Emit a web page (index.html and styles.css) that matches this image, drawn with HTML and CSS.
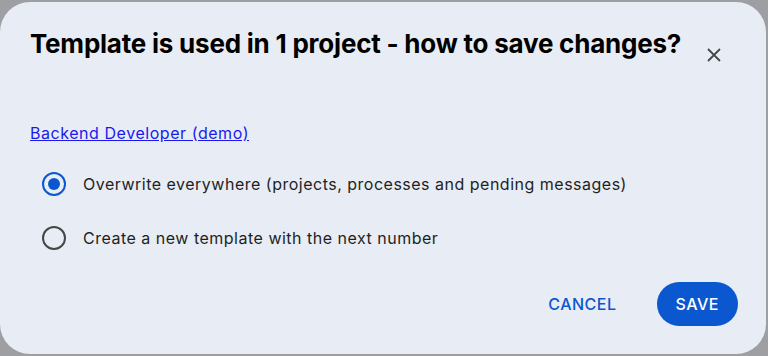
FILE: index.html
```html
<!DOCTYPE html>
<html lang="en">
<head>
    <meta charset="UTF-8">
    <meta name="viewport" content="width=device-width, initial-scale=1.0">
    <title>Save template</title>
    <link rel="stylesheet" href="styles.css">
</head>
<body>
    <div class="dialog">
        <div class="dialog-head">
            <h1>Template is used in 1 project - how to save changes?</h1>
            <button class="close-btn" aria-label="Close">
                <svg width="14" height="14" viewBox="0 0 14 14">
                    <path d="M1 1 L13 13 M13 1 L1 13" stroke="#444746" stroke-width="1.8" fill="none"/>
                </svg>
            </button>
        </div>

        <a class="project-link" href="#">Backend Developer (demo)</a>

        <div class="options">
            <label class="option">
                <input type="radio" name="mode" checked>
                <span class="radio"></span>
                Overwrite everywhere (projects, processes and pending messages)
            </label>
            <label class="option">
                <input type="radio" name="mode">
                <span class="radio"></span>
                Create a new template with the next number
            </label>
        </div>

        <div class="actions">
            <button class="cancel-btn">Cancel</button>
            <button class="save-btn">Save</button>
        </div>
    </div>
</body>
</html>
```

FILE: styles.css
```css
body {
    margin: 0;
    padding: 0;
    background: #9d9fa3;
    font-family: Inter, "Liberation Sans", sans-serif;
}
.dialog {
    box-sizing: border-box;
    width: 766px;
    height: 352px;
    margin: 2px 2px 0 0;
    background-color: #e8ecf4;
    border-radius: 30px;
    padding: 25px 28px 0 30px;
    display: flex;
    flex-direction: column;
}
.dialog-head {
    display: flex;
    align-items: flex-start;
    justify-content: space-between;
}
.dialog-head h1 {
    margin: 0;
    font-size: 26px;
    line-height: 34px;
    font-weight: 700;
    color: #000;
    letter-spacing: -0.22px;
}
.close-btn {
    background: none;
    border: none;
    padding: 0;
    margin: 21px 17px 0 0;
    width: 14px;
    height: 14px;
    cursor: pointer;
}
.close-btn svg {
    display: block;
}
.project-link {
    margin-top: 61px;
    align-self: flex-start;
    color: #1a1aee;
    font-size: 16px;
    line-height: 20px;
    letter-spacing: 0.55px;
}
.options {
    margin-top: 29px;
    display: flex;
    flex-direction: column;
    gap: 30px;
}
.option {
    display: flex;
    align-items: center;
    gap: 17px;
    padding-left: 12px;
    font-size: 16px;
    line-height: 24px;
    letter-spacing: 0.5px;
    color: #1f1f1f;
    cursor: pointer;
}
.option input {
    display: none;
}
.radio {
    box-sizing: border-box;
    width: 24px;
    height: 24px;
    border: 2.5px solid #444746;
    border-radius: 50%;
    display: flex;
    align-items: center;
    justify-content: center;
}
.option input:checked + .radio {
    border-color: #0b57d0;
}
.option input:checked + .radio::after {
    content: "";
    width: 12px;
    height: 12px;
    border-radius: 50%;
    background-color: #0b57d0;
}
.actions {
    margin-top: 32px;
    display: flex;
    justify-content: flex-end;
    gap: 18px;
}
.actions button {
    font-family: Inter, "Liberation Sans", sans-serif;
    font-size: 16px;
    font-weight: 500;
    text-transform: uppercase;
    letter-spacing: 0.5px;
    height: 44px;
    border: none;
    border-radius: 22px;
    cursor: pointer;
}
.cancel-btn {
    background: none;
    color: #0b57d0;
    padding: 0 22px;
}
.save-btn {
    background-color: #0b57d0;
    color: #fff;
    padding: 0 19px;
}
```
